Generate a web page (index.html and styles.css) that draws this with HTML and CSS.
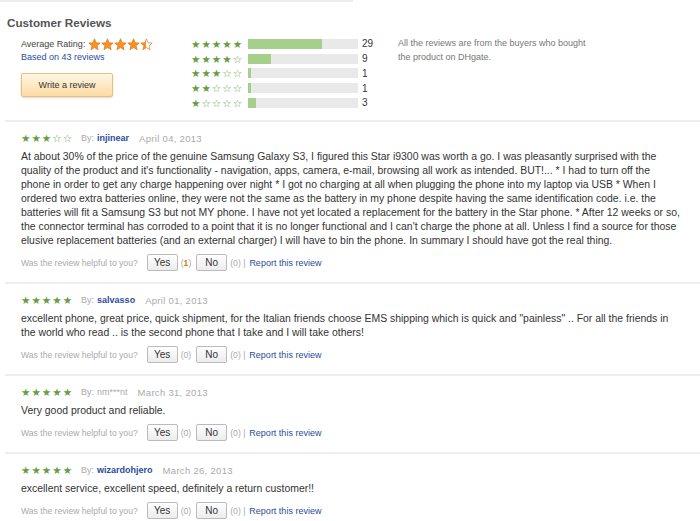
FILE: index.html
```html
<!DOCTYPE html>
<html lang="en">
<head>
    <meta charset="UTF-8">
    <meta name="viewport" content="width=device-width, initial-scale=1.0">
    <title>Customer Reviews</title>
    <link rel="stylesheet" href="styles.css">
</head>
<body>

    <svg width="0" height="0" class="defs">
        <defs>
            <linearGradient id="half">
                <stop offset="50%" stop-color="#f7931e"/>
                <stop offset="50%" stop-color="#fff"/>
            </linearGradient>
            <polygon id="star" points="12,1.5 15,8.8 22.5,9.3 16.8,14.2 18.6,21.8 12,17.7 5.4,21.8 7.2,14.2 1.5,9.3 9,8.8"/>
        </defs>
    </svg>

    <div class="reviews">
        <div class="top-line"></div>
        <h2 class="title">Customer Reviews</h2>

        <div class="summary">
            <div class="average">
                <div class="avg-line">
                    Average Rating:
                    <span class="big-stars">
                        <svg viewBox="0 0 24 24"><use href="#star"/></svg>
                        <svg viewBox="0 0 24 24"><use href="#star"/></svg>
                        <svg viewBox="0 0 24 24"><use href="#star"/></svg>
                        <svg viewBox="0 0 24 24"><use href="#star"/></svg>
                        <svg viewBox="0 0 24 24" class="half"><use href="#star"/></svg>
                    </span>
                </div>
                <a class="based" href="#">Based on 43 reviews</a>
                <button class="write-btn">Write a review</button>
            </div>

            <div class="histogram">
                <div class="hist-row"><span class="stars">★★★★★</span><span class="bar"><span class="fill" style="width:67%"></span></span><span class="count">29</span></div>
                <div class="hist-row"><span class="stars">★★★★☆</span><span class="bar"><span class="fill" style="width:21%"></span></span><span class="count">9</span></div>
                <div class="hist-row"><span class="stars">★★★☆☆</span><span class="bar"><span class="fill" style="width:2.3%"></span></span><span class="count">1</span></div>
                <div class="hist-row"><span class="stars">★★☆☆☆</span><span class="bar"><span class="fill" style="width:2.3%"></span></span><span class="count">1</span></div>
                <div class="hist-row"><span class="stars">★☆☆☆☆</span><span class="bar"><span class="fill" style="width:7%"></span></span><span class="count">3</span></div>
            </div>

            <p class="note">All the reviews are from the buyers who bought the product on DHgate.</p>
        </div>

        <div class="review">
            <div class="review-head">
                <span class="stars">★★★☆☆</span>
                <span class="by">By:</span>
                <a class="author" href="#">injinear</a>
                <span class="date">April 04, 2013</span>
            </div>
            <p class="review-body">At about 30% of the price of the genuine Samsung Galaxy S3, I figured this Star i9300 was worth a go. I was pleasantly surprised with the quality of the product and it's functionality - navigation, apps, camera, e-mail, browsing all work as intended. BUT!... * I had to turn off the phone in order to get any charge happening over night * I got no charging at all when plugging the phone into my laptop via USB * When I ordered two extra batteries online, they were not the same as the battery in my phone despite having the same identification code. i.e. the batteries will fit a Samsung S3 but not MY phone. I have not yet located a replacement for the battery in the Star phone. * After 12 weeks or so, the connector terminal has corroded to a point that it is no longer functional and I can't charge the phone at all. Unless I find a source for those elusive replacement batteries (and an external charger) I will have to bin the phone. In summary I should have got the real thing.</p>
            <div class="helpful">
                Was the review helpful to you?
                <button class="vote">Yes</button>
                <span class="votes">(<b>1</b>)</span>
                <button class="vote">No</button>
                <span class="votes">(0) |</span>
                <a class="report" href="#">Report this review</a>
            </div>
        </div>

        <div class="review">
            <div class="review-head">
                <span class="stars">★★★★★</span>
                <span class="by">By:</span>
                <a class="author" href="#">salvasso</a>
                <span class="date">April 01, 2013</span>
            </div>
            <p class="review-body">excellent phone, great price, quick shipment, for the Italian friends choose EMS shipping which is quick and "painless" .. For all the friends in the world who read .. is the second phone that I take and I will take others!</p>
            <div class="helpful">
                Was the review helpful to you?
                <button class="vote">Yes</button>
                <span class="votes">(0)</span>
                <button class="vote">No</button>
                <span class="votes">(0) |</span>
                <a class="report" href="#">Report this review</a>
            </div>
        </div>

        <div class="review">
            <div class="review-head">
                <span class="stars">★★★★★</span>
                <span class="by">By:</span>
                <span class="author plain">nm***nt</span>
                <span class="date">March 31, 2013</span>
            </div>
            <p class="review-body">Very good product and reliable.</p>
            <div class="helpful">
                Was the review helpful to you?
                <button class="vote">Yes</button>
                <span class="votes">(0)</span>
                <button class="vote">No</button>
                <span class="votes">(0) |</span>
                <a class="report" href="#">Report this review</a>
            </div>
        </div>

        <div class="review">
            <div class="review-head">
                <span class="stars">★★★★★</span>
                <span class="by">By:</span>
                <a class="author" href="#">wizardohjero</a>
                <span class="date">March 26, 2013</span>
            </div>
            <p class="review-body">excellent service, excellent speed, definitely a return customer!!</p>
            <div class="helpful">
                Was the review helpful to you?
                <button class="vote">Yes</button>
                <span class="votes">(0)</span>
                <button class="vote">No</button>
                <span class="votes">(0) |</span>
                <a class="report" href="#">Report this review</a>
            </div>
        </div>
    </div>

</body>
</html>
```

FILE: styles.css
```css
body {
    margin: 0;
    font-family: "Liberation Sans", Arial, sans-serif;
    font-size: 9px;
    color: #333;
    background: #fff;
}
.defs {
    display: block;
    height: 0;
}
.reviews {
    padding-left: 5px;
}
.top-line {
    width: 353px;
    margin-left: -5px;
    border-top: 2px solid #ececec;
}
.title {
    margin: 13px 0 0 2px;
    font-size: 11.7px;
    line-height: 16px;
    color: #555;
}
.summary {
    display: flex;
    padding: 5.5px 0 10px 16px;
    border-bottom: 2px solid #eee;
}
.average {
    width: 170px;
}
.avg-line {
    display: flex;
    align-items: center;
    height: 15px;
    color: #444;
}
.big-stars {
    display: flex;
    margin-left: 3px;
}
.big-stars svg {
    width: 13px;
    height: 13px;
    fill: #f7931e;
    stroke: #e0701a;
    stroke-width: 1.2;
}
.big-stars .half {
    fill: url(#half);
}
.based {
    display: block;
    line-height: 11px;
    color: #2b4c9c;
    text-decoration: none;
}
.write-btn {
    display: block;
    margin-top: 10.5px;
    width: 92px;
    height: 24px;
    font-family: inherit;
    font-size: 9px;
    color: #333;
    border: 1px solid #e8c07c;
    border-radius: 2px;
    background: linear-gradient(#fff6e4, #fcdca4);
    box-shadow: 0 1px 2px rgba(0, 0, 0, 0.15);
}
.histogram {
    width: 207px;
}
.hist-row {
    display: flex;
    align-items: center;
    height: 14.75px;
}
.stars {
    font-family: "DejaVu Sans", sans-serif;
    font-size: 10.5px;
    letter-spacing: 1px;
    color: #6a9c46;
}
.hist-row .stars {
    width: 57px;
}
.bar {
    width: 110px;
    height: 10px;
    background: #e9e9e9;
}
.fill {
    display: block;
    height: 100%;
    background: #a6cf8c;
}
.count {
    margin-left: 4px;
    font-size: 10px;
}
.note {
    margin: -1px 0 0;
    width: 200px;
    line-height: 14px;
    color: #777;
}
.review {
    padding: 9px 0 11px 16px;
    border-bottom: 2px solid #eee;
}
.review-head {
    display: flex;
    align-items: center;
    height: 14px;
}
.by {
    margin-left: 8px;
    margin-right: 3px;
    color: #aaa;
}
.author {
    font-weight: bold;
    color: #2b4c9c;
    text-decoration: none;
}
.author.plain {
    font-weight: normal;
    color: #aaa;
}
.date {
    margin-left: 10px;
    font-size: 9.5px;
    letter-spacing: 0.3px;
    color: #aaa;
}
.review-body {
    margin: 5px 0 0;
    max-width: 660px;
    line-height: 14px;
    font-size: 10.45px;
    color: #333;
}
.helpful {
    display: flex;
    align-items: center;
    height: 17px;
    margin-top: 6px;
    font-size: 8.6px;
    color: #aaa;
}
.vote {
    width: 31px;
    height: 17px;
    padding: 0;
    margin-left: 9px;
    font-family: inherit;
    font-size: 10px;
    color: #333;
    border: 1px solid #bbb;
    border-radius: 2px;
    background: linear-gradient(#fff, #ececec);
}
.votes {
    margin-left: 3px;
}
.votes b {
    color: #e8731a;
}
.votes + .vote {
    margin-left: 5px;
}
.report {
    margin-left: 4px;
    font-size: 9px;
    color: #2b4c9c;
    text-decoration: none;
}
```
